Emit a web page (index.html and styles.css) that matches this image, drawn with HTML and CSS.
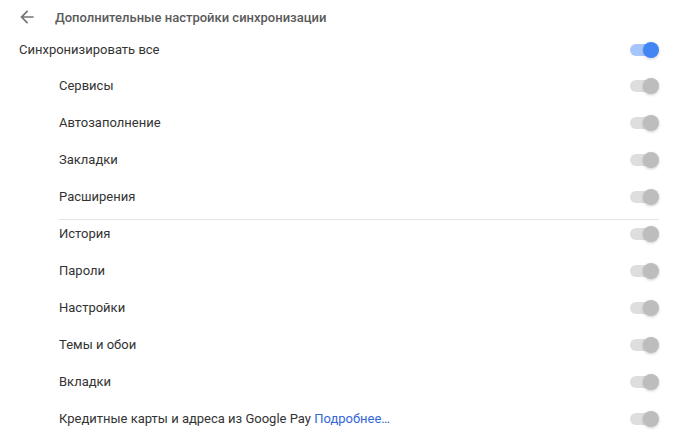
FILE: index.html
```html
<!DOCTYPE html>
<html lang="ru">
<head>
  <meta charset="UTF-8">
  <meta name="viewport" content="width=device-width, initial-scale=1.0">
  <title>Дополнительные настройки синхронизации</title>
  <link rel="stylesheet" href="styles.css">
</head>
<body>
  <div class="page">
    <div class="header">
      <svg class="back" width="20" height="20" viewBox="0 0 24 24">
        <path d="M20 11H7.83l5.59-5.59L12 4l-8 8 8 8 1.41-1.41L7.83 13H20v-2z" fill="#757575"/>
      </svg>
      <span class="title">Дополнительные настройки синхронизации</span>
    </div>

    <div class="row main">
      <span>Синхронизировать все</span>
      <span class="toggle on"><span class="bar"></span><span class="knob"></span></span>
    </div>

    <div class="sub">
      <div class="row"><span>Сервисы</span><span class="toggle"><span class="bar"></span><span class="knob"></span></span></div>
      <div class="row"><span>Автозаполнение</span><span class="toggle"><span class="bar"></span><span class="knob"></span></span></div>
      <div class="row"><span>Закладки</span><span class="toggle"><span class="bar"></span><span class="knob"></span></span></div>
      <div class="row"><span>Расширения</span><span class="toggle"><span class="bar"></span><span class="knob"></span></span></div>
      <div class="sep"></div>
      <div class="row"><span>История</span><span class="toggle"><span class="bar"></span><span class="knob"></span></span></div>
      <div class="row"><span>Пароли</span><span class="toggle"><span class="bar"></span><span class="knob"></span></span></div>
      <div class="row"><span>Настройки</span><span class="toggle"><span class="bar"></span><span class="knob"></span></span></div>
      <div class="row"><span>Темы и обои</span><span class="toggle"><span class="bar"></span><span class="knob"></span></span></div>
      <div class="row"><span>Вкладки</span><span class="toggle"><span class="bar"></span><span class="knob"></span></span></div>
      <div class="row"><span>Кредитные карты и адреса из Google Pay <a href="#">Подробнее…</a></span><span class="toggle"><span class="bar"></span><span class="knob"></span></span></div>
    </div>
  </div>
</body>
</html>
```

FILE: styles.css
```css
body {
  margin: 0;
  font-family: Roboto, "Liberation Sans", sans-serif;
  font-size: 13px;
  color: #333;
  background-color: #fff;
}
.page {
  padding: 0 18px 0 19px;
}
.header {
  display: flex;
  align-items: center;
  height: 28px;
  padding-top: 3px;
}
.back { margin-left: -2px; }
.title {
  margin-left: 18px;
  font-weight: 500;
  color: #5a5a5a;
}
.row {
  display: flex;
  align-items: center;
  justify-content: space-between;
  height: 37px;
}
.main { margin-bottom: -1px; }
.sub { padding-left: 40px; }
.sep {
  height: 1px;
  background-color: #e6e6e6;
  margin: 4px 2px -5px 0;
}
a {
  color: #3367d6;
  text-decoration: none;
}
.toggle {
  display: flex;
  align-items: center;
  width: 34px;
  height: 16px;
}
.bar {
  width: 28px;
  height: 12px;
  margin-left: 3px;
  border-radius: 6px;
  background-color: #dedede;
}
.knob {
  width: 16px;
  height: 16px;
  margin-left: -15px;
  border-radius: 50%;
  background-color: #bdbdbd;
  box-shadow: 0 1px 3px rgba(0,0,0,0.2);
}
.toggle.on .bar { background-color: #a6c5fa; }
.toggle.on .knob { background-color: #4285f4; }
```
